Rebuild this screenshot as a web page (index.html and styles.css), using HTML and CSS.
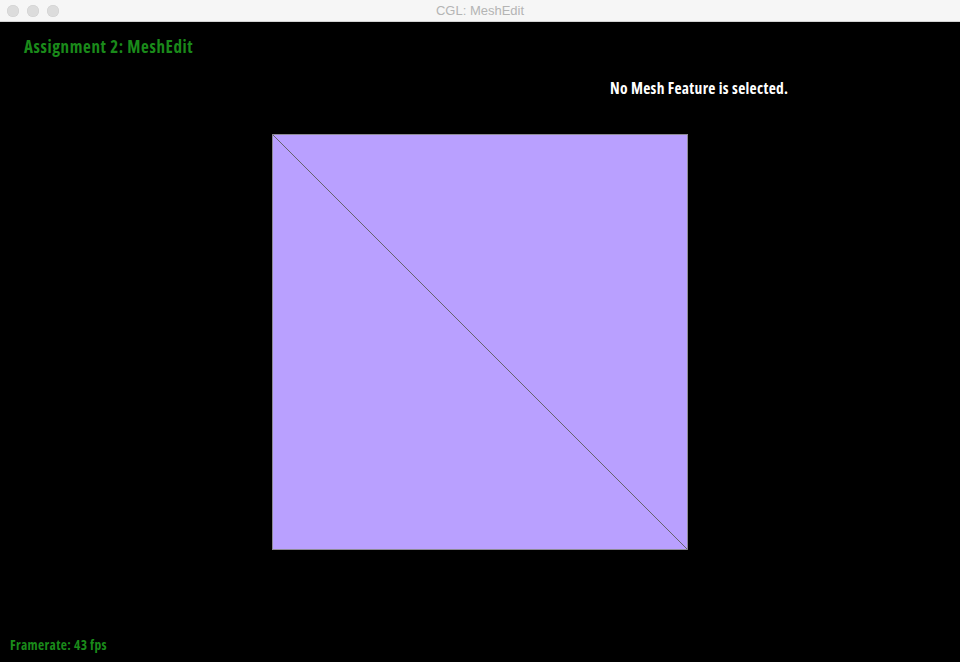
FILE: index.html
```html
<!DOCTYPE html>
<html>
<head>
<meta charset="utf-8">
<link rel="stylesheet" href="styles.css">
<title>CGL: MeshEdit</title>
</head>
<body>
<div class="window">
  <div class="titlebar">
    <div class="lights"><span class="light"></span><span class="light"></span><span class="light"></span></div>
    <div class="wtitle">CGL: MeshEdit</div>
  </div>
  <div class="viewport">
    <div class="heading">Assignment 2: MeshEdit</div>
    <div class="info">No Mesh Feature is selected.</div>
    <div class="mesh">
      <svg width="416" height="416" viewBox="0 0 416 416">
        <rect x="0.5" y="0.5" width="415" height="415" fill="#b9a0ff" stroke="#8e8a96" stroke-width="1"/>
        <line x1="0.5" y1="0.5" x2="415.5" y2="415.5" stroke="#66636c" stroke-width="1"/>
      </svg>
    </div>
    <div class="fps">Framerate: 43 fps</div>
  </div>
</div>
</body>
</html>
```

FILE: styles.css
```css
html, body {
  margin: 0;
  padding: 0;
  background: #000;
}
.window {
  width: 960px;
  height: 662px;
  display: flex;
  flex-direction: column;
  background: #000;
  overflow: hidden;
}
.titlebar {
  height: 21px;
  flex: none;
  background: #f6f6f6;
  border-bottom: 1px solid #d2d2d2;
  display: flex;
  align-items: center;
  position: relative;
}
.lights {
  display: flex;
  gap: 8px;
  padding-left: 7px;
}
.light {
  width: 12px;
  height: 12px;
  border-radius: 50%;
  background: #dcdcdc;
  box-shadow: inset 0 0 0 0.5px #cfcfcf;
}
.wtitle {
  position: absolute;
  left: 0;
  right: 0;
  top: 0;
  line-height: 22px;
  text-align: center;
  font-family: "Liberation Sans", Arial, sans-serif;
  font-size: 13px;
  color: #b4b4b4;
}
.viewport {
  flex: 1;
  display: flex;
  flex-direction: column;
  font-family: "Open Sans", "DejaVu Sans Condensed", sans-serif;
  font-stretch: condensed;
  font-weight: 700;
}
.heading {
  color: #1a8a1a;
  font-size: 17px;
  line-height: 20px;
  margin: 15px 0 0 24px;
  letter-spacing: 0.6px;
}
.info {
  color: #fff;
  font-size: 15.5px;
  line-height: 20px;
  margin: 21px 0 0 610px;
  letter-spacing: 0.3px;
}
.mesh {
  margin: 36px 0 0 272px;
  height: 416px;
}
.mesh svg {
  display: block;
}
.fps {
  color: #1a8a1a;
  font-size: 13.5px;
  line-height: 16px;
  margin: auto 0 9px 10px;
  letter-spacing: 0.35px;
}
```
